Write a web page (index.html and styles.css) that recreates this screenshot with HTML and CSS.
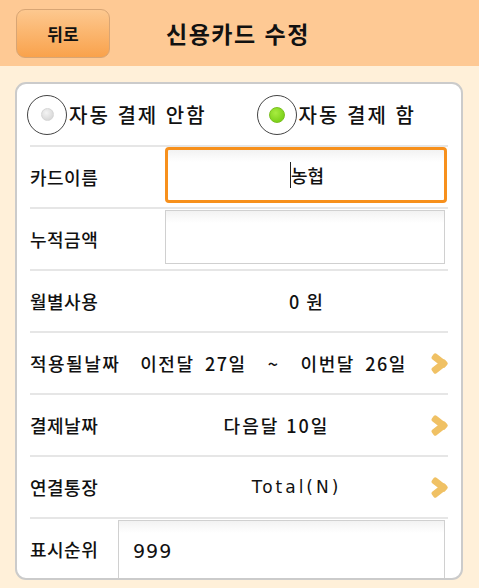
FILE: index.html
```html
<!DOCTYPE html>
<html lang="ko">
<head>
  <meta charset="UTF-8" />
  <title>신용카드 수정</title>
  <link rel="stylesheet" href="styles.css">
</head>
<body>
  <div class="header">
    <button class="back-btn">뒤로</button>
    <h1>신용카드 수정</h1>
  </div>

  <div class="panel">
    <div class="radio-row">
      <label class="radio"><span class="radio-circle"><span class="dot"></span></span>자동 결제 안함</label>
      <label class="radio on"><span class="radio-circle"><span class="dot"></span></span>자동 결제 함</label>
    </div>

    <div class="row">
      <span class="label">카드이름</span>
      <div class="field active"><span class="caret"></span>농협</div>
    </div>

    <div class="row">
      <span class="label">누적금액</span>
      <div class="field"></div>
    </div>

    <div class="row">
      <span class="label">월별사용</span>
      <span class="value">0 원</span>
    </div>

    <div class="row">
      <span class="label wide">적용될날짜</span>
      <span class="value range">이전달 27일 &nbsp;~ &nbsp;이번달 26일</span>
      <span class="chevron"></span>
    </div>

    <div class="row">
      <span class="label">결제날짜</span>
      <span class="value shift">다음달 10일</span>
      <span class="chevron"></span>
    </div>

    <div class="row">
      <span class="label">연결통장</span>
      <span class="value latin">Total(N)</span>
      <span class="chevron"></span>
    </div>

    <div class="row last">
      <span class="label short">표시순위</span>
      <div class="field left">999</div>
    </div>
  </div>
</body>
</html>
```

FILE: styles.css
```css
body {
  margin: 0;
  font-family: "Noto Sans CJK KR", "Noto Sans", sans-serif;
  background: #fff0d9;
  color: #111;
  width: 479px;
  height: 588px;
  overflow: hidden;
}

.header {
  height: 66px;
  background: #fec994;
  display: flex;
  align-items: center;
  padding-left: 16px;
  box-sizing: border-box;
}

.back-btn {
  width: 94px;
  height: 49px;
  margin-top: 1px;
  border: 1px solid #d8a574;
  border-radius: 9px;
  background: linear-gradient(#fdc88f, #f9a24c);
  font-family: inherit;
  font-size: 17px;
  font-weight: 700;
  color: #111;
  padding: 0;
}

h1 {
  margin: 0 0 0 56px;
  font-size: 23px;
  font-weight: 700;
  letter-spacing: 1.5px;
}

.panel {
  margin: 16px 16px 0 15px;
  height: 494px;
  background: #fff;
  border: 2px solid #cbcbcb;
  border-radius: 11px;
  padding: 0 13px;
  overflow: hidden;
}

.radio-row {
  height: 61px;
  display: flex;
  align-items: center;
  font-size: 20px;
  font-weight: 500;
  letter-spacing: 2px;
}

.radio {
  display: flex;
  align-items: center;
  gap: 2px;
  margin-left: -3px;
}

.radio.on {
  margin-left: 50px;
}

.radio-circle {
  width: 38px;
  height: 38px;
  border: 1px solid #444;
  border-radius: 50%;
  display: flex;
  align-items: center;
  justify-content: center;
  background: #fff;
}

.dot {
  width: 11px;
  height: 11px;
  border-radius: 50%;
  background: radial-gradient(circle at 40% 35%, #f4f4f4, #cfcfcf);
  border: 1px solid #d6d6d6;
}

.radio.on .dot {
  width: 14px;
  height: 14px;
  background: radial-gradient(circle at 40% 35%, #a8ec40, #6cc80c);
  border-color: #7ac020;
}

.row {
  height: 60px;
  border-top: 2px solid #e6e6e6;
  display: flex;
  align-items: center;
  font-size: 18px;
  font-weight: 500;
}

.label {
  width: 135px;
  flex-shrink: 0;
  letter-spacing: 0.5px;
}

.label.wide {
  width: auto;
  margin-right: 20px;
  letter-spacing: 1.5px;
}

.label.short {
  width: 88px;
}

.value {
  flex: 1;
  text-align: center;
  letter-spacing: 1px;
}

.value.range {
  text-align: left;
  letter-spacing: 1.5px;
  word-spacing: 4px;
}

.value.shift {
  padding-right: 40px;
  letter-spacing: 2px;
}

.value.latin {
  font-family: "DejaVu Sans", sans-serif;
  font-size: 17px;
  letter-spacing: 3px;
}

.chevron {
  width: 20px;
  height: 20px;
  flex-shrink: 0;
  position: relative;
}

.chevron::before,
.chevron::after {
  content: "";
  position: absolute;
  left: 3px;
  width: 17px;
  height: 7px;
  background: #f0c164;
  border-radius: 2px;
}

.chevron::before {
  top: 4px;
  transform: rotate(38deg);
}

.chevron::after {
  top: 10px;
  transform: rotate(-38deg);
}

.field {
  flex: 1;
  align-self: flex-start;
  height: 54px;
  margin-top: 1px;
  margin-right: 3px;
  box-sizing: border-box;
  border: 1px solid #d0d0d0;
  background: linear-gradient(#f2f2f2, #fff 12px);
  display: flex;
  align-items: center;
  justify-content: center;
}

.field.active {
  height: 56px;
  margin-top: 0;
  margin-right: 1px;
  border: 3px solid #f7901c;
  border-radius: 4px;
  padding-left: 2px;
}

.caret {
  width: 1px;
  height: 26px;
  background: #222;
}

.field.left {
  justify-content: flex-start;
  padding-left: 14px;
  height: 62px;
  font-family: "DejaVu Sans", sans-serif;
  font-size: 19px;
  letter-spacing: 1px;
}
```
